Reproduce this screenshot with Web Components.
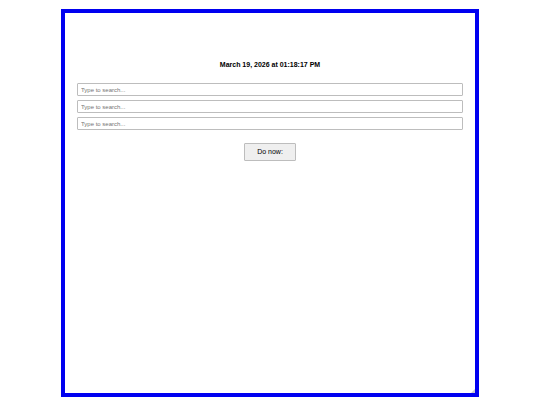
<!DOCTYPE html>
<html lang="en">
<head>
  <meta charset="UTF-8">
  <meta name="viewport" content="width=device-width, initial-scale=1.0">
  <title>Search</title>
  <style>
    body {
      margin: 0;
      background: #fff;
      color: #000;
      font-family: "Liberation Sans", Arial, sans-serif;
    }
  </style>
</head>
<body>
  <search-frame>
    <date-heading>March 19, 2026 at 01:18:17 PM</date-heading>
    <search-list>
      <search-field label="First search"></search-field>
      <search-field label="Second search"></search-field>
      <search-field label="Third search"></search-field>
    </search-list>
    <action-button>Do now:</action-button>
  </search-frame>

  <script>
    class SearchFrame extends HTMLElement {
      connectedCallback() {
        this.attachShadow({ mode: 'open' });
        this.shadowRoot.innerHTML = `
          <style>
            :host {
              display: flex;
              box-sizing: border-box;
              min-height: 100vh;
              padding: 9px 61px 8px;
            }
            main {
              position: relative;
              flex: 1;
              display: flex;
              flex-direction: column;
              align-items: stretch;
              padding: 48px 12px 12px;
              border: 4px solid #0000f0;
            }
            .grip {
              position: absolute;
              right: 0;
              bottom: 0;
              width: 4px;
              height: 4px;
            }
          </style>
          <main>
            <slot></slot>
            <svg class="grip" viewBox="0 0 4 4" aria-hidden="true">
              <path d="M4 0V4H0Z" fill="#ccc"/>
            </svg>
          </main>
        `;
      }
    }
    customElements.define('search-frame', SearchFrame);

    class DateHeading extends HTMLElement {
      connectedCallback() {
        this.attachShadow({ mode: 'open' });
        this.shadowRoot.innerHTML = `
          <style>
            :host {
              display: block;
              text-align: center;
            }
            h1 {
              margin: 0;
              font-size: 7px;
              line-height: 8px;
            }
          </style>
          <h1><slot></slot></h1>
        `;
      }
    }
    customElements.define('date-heading', DateHeading);

    class SearchList extends HTMLElement {
      connectedCallback() {
        this.attachShadow({ mode: 'open' });
        this.shadowRoot.innerHTML = `
          <style>
            :host {
              display: flex;
              flex-direction: column;
              gap: 4px;
              margin: 14px 0 13px;
            }
          </style>
          <slot></slot>
        `;
      }
    }
    customElements.define('search-list', SearchList);

    class SearchField extends HTMLElement {
      connectedCallback() {
        this.attachShadow({ mode: 'open' });
        this.shadowRoot.innerHTML = `
          <style>
            :host {
              display: block;
            }
            input {
              display: block;
              box-sizing: border-box;
              width: 100%;
              height: 13px;
              margin: 0;
              padding: 0 3px;
              border: 1px solid #bdbdbd;
              border-radius: 1px;
              background: #fff;
              font: 6px "Liberation Sans", Arial, sans-serif;
            }
            input::placeholder {
              color: #757575;
            }
          </style>
          <input type="text" placeholder="Type to search..." aria-label="${this.getAttribute('label')}">
        `;
      }
    }
    customElements.define('search-field', SearchField);

    class ActionButton extends HTMLElement {
      connectedCallback() {
        this.attachShadow({ mode: 'open' });
        this.shadowRoot.innerHTML = `
          <style>
            :host {
              display: flex;
              justify-content: center;
            }
            button {
              padding: 4px 12px;
              border: 1px solid #bdbdbd;
              border-radius: 1px;
              background: #efefef;
              color: #000;
              font: 7px/8px "Liberation Sans", Arial, sans-serif;
            }
          </style>
          <button type="button"><slot></slot></button>
        `;
      }
    }
    customElements.define('action-button', ActionButton);
  </script>
</body>
</html>
